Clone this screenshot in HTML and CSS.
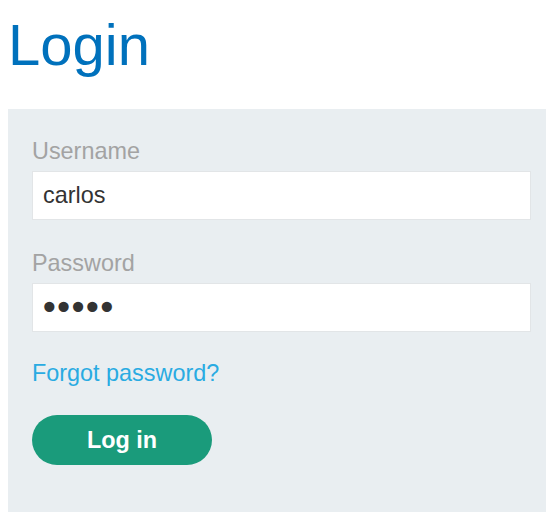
FILE: index.html
```html
<!DOCTYPE html>
<html lang="en">
<head>
<meta charset="utf-8">
<title>Login</title>
<link rel="stylesheet" href="styles.css">
</head>
<body>
<h1 class="page-title">Login</h1>
<section class="login-panel">
  <form class="login-form">
    <label class="field-label" for="username">Username</label>
    <input class="field-input" id="username" type="text" value="carlos">
    <label class="field-label field-label-second" for="password">Password</label>
    <input class="field-input field-input-password" id="password" type="password" value="12345">
    <a class="forgot-link" href="#">Forgot password?</a>
    <button class="login-button" type="button">Log in</button>
  </form>
</section>
</body>
</html>
```
FILE: styles.css
```css
html, body {
  background: #ffffff;
}
body {
  margin: 8px 0 0 8px;
  font-family: "Liberation Sans", Arial, sans-serif;
  overflow: hidden;
}
.page-title {
  margin: 3px 0 31px 0;
  font-size: 58px;
  font-weight: normal;
  line-height: normal;
  color: #0071bc;
}
.login-panel {
  background: #e9eef1;
  padding: 29px 15px 47px 24px;
}
.login-form {
  display: flex;
  flex-direction: column;
  align-items: flex-start;
}
.field-label {
  font-size: 23.4px;
  line-height: normal;
  color: #a3a3a3;
  margin-bottom: 6px;
}
.field-label-second {
  margin-top: 30px;
}
.field-input {
  box-sizing: border-box;
  width: 100%;
  height: 49px;
  margin: 0;
  padding: 0 10px;
  border: 1px solid #e2e5e7;
  border-radius: 0;
  background: #ffffff;
  font-family: "Liberation Sans", Arial, sans-serif;
  font-size: 23.4px;
  color: #333333;
  outline: none;
}
.field-input-password {
  font-family: "DejaVu Sans", sans-serif;
  font-size: 35px;
  letter-spacing: -6.3px;
  padding: 0 0 0 6px;
}
.forgot-link {
  margin-top: 28px;
  font-size: 23.4px;
  line-height: normal;
  color: #29abe2;
  text-decoration: none;
}
.login-button {
  margin-top: 28px;
  width: 180px;
  height: 50px;
  border: none;
  border-radius: 25px;
  background: #1a9b7b;
  color: #ffffff;
  font-family: "Liberation Sans", Arial, sans-serif;
  font-size: 23.4px;
  font-weight: bold;
  padding: 0;
}
```
